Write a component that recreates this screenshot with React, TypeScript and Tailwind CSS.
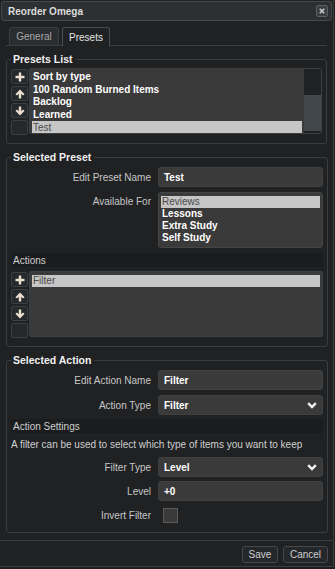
import { ReactNode } from "react";

const PlusIcon = () => (
  <svg width="10" height="10" viewBox="0 0 10 10">
    <path d="M3.8 0.5h2.4v3.3h3.3v2.4H6.2v3.3H3.8V6.2H0.5V3.8h3.3z" fill="#ebe0d0" />
  </svg>
);

const UpIcon = () => (
  <svg width="10" height="10" viewBox="0 0 10 10">
    <path d="M5 0.6L9.6 5.2 8 6.6 6.2 4.8V9.6H3.8V4.8L2 6.6 0.4 5.2z" fill="#ebe0d0" />
  </svg>
);

const DownIcon = () => (
  <svg width="10" height="10" viewBox="0 0 10 10">
    <path d="M5 9.4L9.6 4.8 8 3.4 6.2 5.2V0.4H3.8V5.2L2 3.4 0.4 4.8z" fill="#ebe0d0" />
  </svg>
);

const Chevron = () => (
  <svg width="10" height="7" viewBox="0 0 10 7">
    <path d="M1.2 1.2L5 5 8.8 1.2" stroke="#f2f2f2" strokeWidth="2.4" fill="none" />
  </svg>
);

// small square buttons left of a list
const SideButtons = () => {
  const btn = "w-[17px] h-[15px] flex items-center justify-center rounded-[2px] border border-[#3b3f42] bg-[#26292c]";
  return (
    <div className="flex flex-col gap-[2px] pt-[1px]">
      <div className={btn}><PlusIcon /></div>
      <div className={btn}><UpIcon /></div>
      <div className={btn}><DownIcon /></div>
      <div className={btn}></div>
    </div>
  );
};

const Section = ({ title, className, children }: { title: string; className?: string; children: ReactNode }) => (
  <fieldset className={`border border-[#3a3e41] rounded-[3px] px-[4px] ${className ?? ""}`}>
    <legend className="ml-[0px] pl-[2px] pr-[3px] text-[10.5px] leading-[14px] font-bold text-[#f0f0f0]">{title}</legend>
    {children}
  </fieldset>
);

const Row = ({ label, children, className }: { label: string; children: ReactNode; className?: string }) => (
  <div className={`flex items-center gap-[7px] ${className ?? ""}`}>
    <div className="w-[140px] text-right text-[#c8c8c8]">{label}</div>
    {children}
  </div>
);

const TextBox = ({ value }: { value: string }) => (
  <div className="w-[165px] h-[20px] flex items-center px-[5px] rounded-[3px] border border-[#414141] bg-[#3a3a3a] font-bold text-white">
    {value}
  </div>
);

const SelectBox = ({ value }: { value: string }) => (
  <div className="w-[165px] h-[20px] flex items-center justify-between pl-[5px] pr-[5px] rounded-[3px] border border-[#414141] bg-[#3a3a3a] font-bold text-white">
    <span>{value}</span>
    <Chevron />
  </div>
);

const presets = ["Sort by type", "100 Random Burned Items", "Backlog", "Learned"];

export default function App() {
  return (
    <div className="w-[335px] h-[569px] overflow-hidden bg-[#1c1e20] font-['Liberation_Sans',Arial,sans-serif] text-[10px] text-[#cccccc]">
      <div className="w-[334px] h-[567px] border-r border-b border-[#3a3e41] bg-[#1f2123] flex flex-col">
        {/* title bar */}
        <div className="mx-[1px] mt-[1px] h-[20px] flex items-center justify-between pl-[6px] pr-[3px] rounded-[3px] border border-[#46494c] bg-[#2d3033]">
          <span className="font-bold text-[#dcdcdc]">Reorder Omega</span>
          <div className="w-[12px] h-[12px] flex items-center justify-center rounded-[2px] border border-[#5c6063] bg-[#3a3e41]">
            <svg width="6" height="6" viewBox="0 0 6 6">
              <path d="M0.8 0.8L5.2 5.2M5.2 0.8L0.8 5.2" stroke="#c8c8c8" strokeWidth="1.6" />
            </svg>
          </div>
        </div>

        {/* tabs */}
        <div className="mx-[6px] mt-[6px] flex items-end gap-[3px] pl-[3px] border-b border-[#3a3e41]">
          <div className="w-[50px] h-[18px] flex items-center justify-center rounded-t-[3px] border border-b-0 border-[#3a3e41] bg-[#2a2d30] text-[#a8a8a8]">
            General
          </div>
          <div className="w-[48px] h-[19px] -mb-px flex items-center justify-center rounded-t-[3px] border border-b-0 border-[#4a4e51] bg-[#1f2123] text-[#e4e4e4]">
            Presets
          </div>
        </div>

        <div className="px-[6px]">
          {/* presets list */}
          <Section title="Presets List" className="mt-[6px] pt-[2px] pb-[8px]">
            <div className="flex gap-[1px]">
              <SideButtons />
              <div className="flex flex-1 h-[66px] rounded-[2px] border border-[#3c4043] overflow-hidden">
                <div className="flex-1 bg-[#3a3a3a] px-[2px] pt-[2px] overflow-hidden">
                  {presets.map((p) => (
                    <div key={p} className="pl-[1px] leading-[12.5px] h-[12.5px] font-bold text-white">{p}</div>
                  ))}
                  <div className="pl-[1px] leading-[13px] h-[13px] bg-[#c6c6c6] text-[#4a4a4a]">Test</div>
                </div>
                <div className="w-[17px] bg-[#1e2224] flex flex-col justify-end pb-[2px]">
                  <div className="h-[36px] bg-[#41474a]"></div>
                </div>
              </div>
            </div>
          </Section>

          {/* selected preset */}
          <Section title="Selected Preset" className="mt-[6px] pt-[3px] pb-[8px]">
            <Row label="Edit Preset Name">
              <TextBox value="Test" />
            </Row>
            <div className="flex gap-[7px] mt-[5px]">
              <div className="w-[140px] text-right pt-[4px] leading-[12px] text-[#c8c8c8]">Available For</div>
              <div className="w-[165px] h-[56px] rounded-[3px] border border-[#454545] bg-[#3a3a3a] pt-[3px] px-[2px] leading-[12px]">
                <div className="pl-[1px] bg-[#c6c6c6] text-[#4a4a4a]">Reviews</div>
                <div className="pl-[1px] font-bold text-white">Lessons</div>
                <div className="pl-[1px] font-bold text-white">Extra Study</div>
                <div className="pl-[1px] font-bold text-white">Self Study</div>
              </div>
            </div>
            <div className="mt-[5px] h-[14px] flex items-center pl-[2px] bg-[#1a1c1e] text-[#cfcfcf]">Actions</div>
            <div className="flex gap-[1px] mt-[4px]">
              <SideButtons />
              <div className="flex-1 h-[66px] rounded-[2px] border border-[#3c4043] bg-[#3a3a3a] pt-[3px] px-[2px] leading-[12px]">
                <div className="pl-[1px] bg-[#c6c6c6] text-[#4a4a4a]">Filter</div>
              </div>
            </div>
          </Section>

          {/* selected action */}
          <Section title="Selected Action" className="mt-[6px] pt-[3px] pb-[9px]">
            <Row label="Edit Action Name">
              <TextBox value="Filter" />
            </Row>
            <Row label="Action Type" className="mt-[5px]">
              <SelectBox value="Filter" />
            </Row>
            <div className="mt-[4px] h-[14px] flex items-center pl-[2px] bg-[#1a1c1e] text-[#cfcfcf]">Action Settings</div>
            <div className="mt-[6px] leading-[12px] text-[#d0d0d0]">A filter can be used to select which type of items you want to keep</div>
            <Row label="Filter Type" className="mt-[6px]">
              <SelectBox value="Level" />
            </Row>
            <Row label="Level" className="mt-[4px]">
              <TextBox value="+0" />
            </Row>
            <Row label="Invert Filter" className="mt-[7px]">
              <div className="ml-[5px] w-[15px] h-[15px] border border-[#5a5a5a] bg-[#3a3a3a]"></div>
            </Row>
          </Section>
        </div>

        {/* footer */}
        <div className="mt-[7px] border-t border-[#3a3e41] flex justify-end gap-[5px] pt-[5px] pr-[5px]">
          <div className="w-[36px] h-[17px] flex items-center justify-center rounded-[3px] border border-[#45494c] bg-[#25282b] text-[#cfcfcf]">Save</div>
          <div className="w-[45px] h-[17px] flex items-center justify-center rounded-[3px] border border-[#45494c] bg-[#25282b] text-[#cfcfcf]">Cancel</div>
        </div>
      </div>
    </div>
  );
}
